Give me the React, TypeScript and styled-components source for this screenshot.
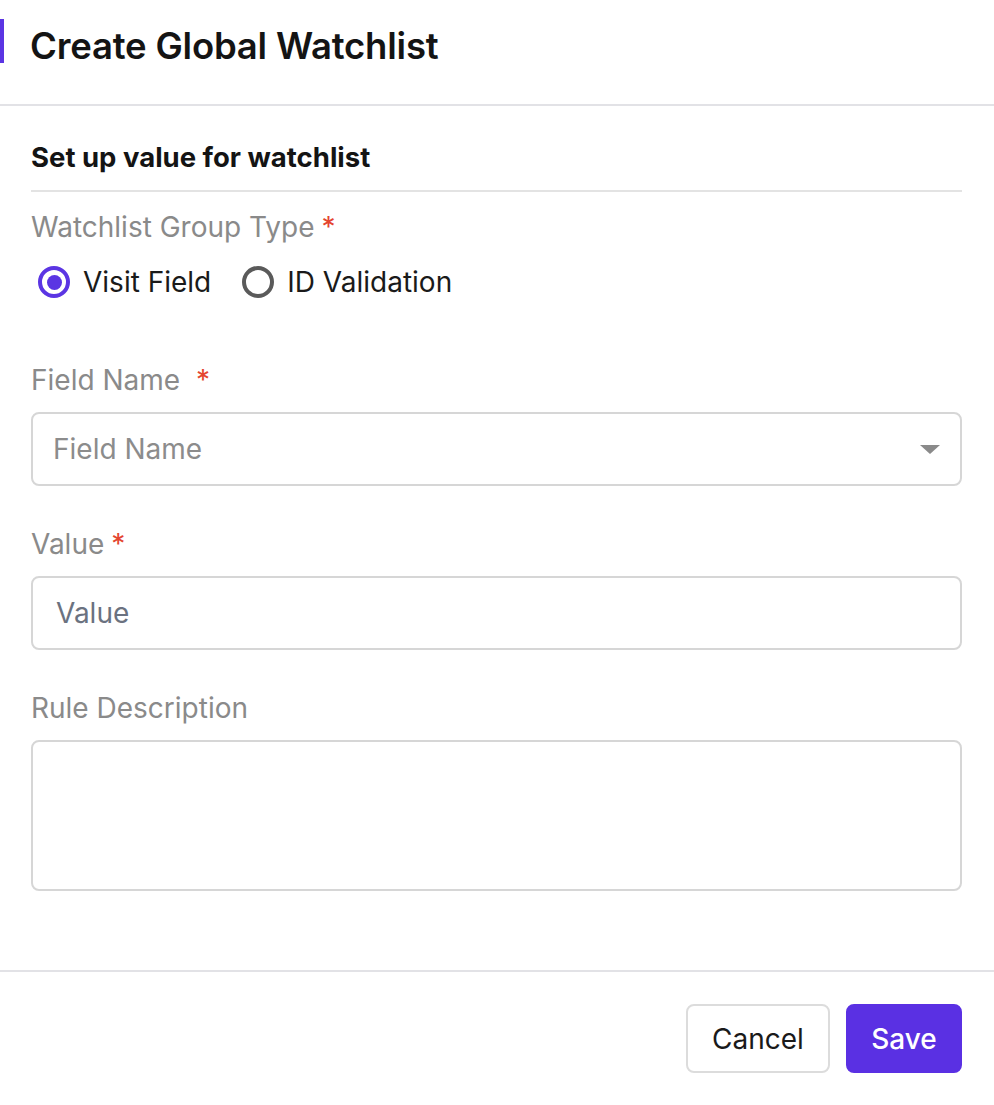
import React from 'react'
import styled, { createGlobalStyle } from 'styled-components'

const GlobalStyle = createGlobalStyle`
  html, body {
    margin: 0;
    padding: 0;
    background: #ffffff;
  }
  body {
    font-family: Inter, 'Noto Sans', sans-serif;
    color: #161616;
  }
  * {
    box-sizing: border-box;
  }
`

const Modal = styled.div`
  width: 994px;
  height: 1105px;
  background: #ffffff;
  display: flex;
  flex-direction: column;
`

const Header = styled.header`
  height: 106px;
  padding-top: 19px;
  border-bottom: 2px solid #e2e2e6;
  display: flex;
  align-items: flex-start;
`

const AccentBar = styled.span`
  width: 4px;
  height: 44px;
  background: #5b35e3;
`

const Title = styled.h1`
  margin: 5px 0 0 26px;
  font-size: 36.5px;
  line-height: 44px;
  font-weight: 600;
  color: #141414;
  letter-spacing: -0.2px;
`

const Body = styled.main`
  flex: 1;
  padding: 0 32px 0 31px;
  display: flex;
  flex-direction: column;
`

const SectionTitle = styled.h2`
  margin: 0;
  padding: 36px 0 18px;
  font-size: 27.5px;
  line-height: 30px;
  font-weight: 700;
  color: #141414;
  border-bottom: 2px solid #e3e3e3;
`

const Field = styled.div<{ $top: number }>`
  display: flex;
  flex-direction: column;
  gap: 15px;
  margin-top: ${p => p.$top}px;
`

const Label = styled.label`
  font-size: 28px;
  line-height: 34px;
  color: #8a8a8a;
`

const Required = styled.span<{ $gap?: number }>`
  color: #e4452f;
  margin-left: ${p => p.$gap ?? 7}px;
`

const RadioRow = styled.div`
  display: flex;
  align-items: center;
  gap: 31px;
  height: 36px;
  margin-top: 20px;
  padding-left: 7px;
`

const RadioOption = styled.label`
  display: flex;
  align-items: center;
  gap: 13px;
  font-size: 28px;
  line-height: 36px;
  color: #1a1a1a;
`

const RadioCircle = styled.span<{ $checked?: boolean }>`
  width: 32px;
  height: 32px;
  border-radius: 50%;
  border: 4px solid ${p => (p.$checked ? '#5b35e3' : '#5a5a5a')};
  display: flex;
  align-items: center;
  justify-content: center;

  &::after {
    content: '';
    width: 15px;
    height: 15px;
    border-radius: 50%;
    background: ${p => (p.$checked ? '#5b35e3' : 'transparent')};
  }
`

const Control = styled.div<{ $height: number; $pad: number }>`
  height: ${p => p.$height}px;
  border: 2px solid #d6d6d6;
  border-radius: 8px;
  display: flex;
  align-items: center;
  justify-content: space-between;
  padding: 0 20px 0 ${p => p.$pad}px;
`

const Placeholder = styled.span<{ $color: string }>`
  font-size: 28px;
  color: ${p => p.$color};
`

const Caret = styled.span`
  width: 0;
  height: 0;
  border-left: 10px solid transparent;
  border-right: 10px solid transparent;
  border-top: 9px solid #8a8a8a;
`

const TextArea = styled.div`
  height: 151px;
  border: 2px solid #d6d6d6;
  border-radius: 8px;
`

const Footer = styled.footer`
  height: 135px;
  border-top: 2px solid #e2e2e6;
  padding: 32px 32px 0 0;
  display: flex;
  justify-content: flex-end;
  align-items: flex-start;
  gap: 16px;
`

const Button = styled.button<{ $primary?: boolean; $width: number }>`
  width: ${p => p.$width}px;
  height: 69px;
  padding: 0;
  border-radius: 8px;
  font-family: Inter, 'Noto Sans', sans-serif;
  font-size: 28px;
  font-weight: ${p => (p.$primary ? 500 : 400)};
  border: 2px solid ${p => (p.$primary ? '#5a30e3' : '#dcdcdc')};
  background: ${p => (p.$primary ? '#5a30e3' : '#ffffff')};
  color: ${p => (p.$primary ? '#ffffff' : '#1a1a1a')};
`

export default function App() {
  return (
    <>
      <GlobalStyle />
      <Modal>
        <Header>
          <AccentBar />
          <Title>Create Global Watchlist</Title>
        </Header>

        <Body>
          <SectionTitle>Set up value for watchlist</SectionTitle>

          <Field $top={18}>
            <Label>
              Watchlist Group Type<Required>*</Required>
            </Label>
          </Field>
          <RadioRow>
            <RadioOption>
              <RadioCircle $checked />
              Visit Field
            </RadioOption>
            <RadioOption>
              <RadioCircle />
              ID Validation
            </RadioOption>
          </RadioRow>

          <Field $top={63}>
            <Label>
              Field Name <Required $gap={8}>*</Required>
            </Label>
            <Control $height={74} $pad={20}>
              <Placeholder $color='#8c8c8c'>Field Name</Placeholder>
              <Caret />
            </Control>
          </Field>

          <Field $top={41}>
            <Label>
              Value<Required>*</Required>
            </Label>
            <Control $height={74} $pad={23}>
              <Placeholder $color='#6b7280'>Value</Placeholder>
            </Control>
          </Field>

          <Field $top={41}>
            <Label>Rule Description</Label>
            <TextArea />
          </Field>
        </Body>

        <Footer>
          <Button $width={144}>Cancel</Button>
          <Button $primary $width={116}>
            Save
          </Button>
        </Footer>
      </Modal>
    </>
  )
}
